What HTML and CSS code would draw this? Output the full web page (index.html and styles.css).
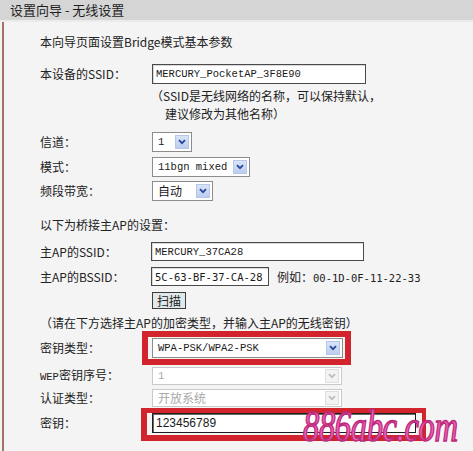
FILE: index.html
```html
<!DOCTYPE html>
<html lang="zh-CN">
<head>
<meta charset="utf-8">
<title>设置向导 - 无线设置</title>
<link rel="stylesheet" href="styles.css">
</head>
<body>
<div class="header">设置向导 - 无线设置</div>
<div class="panel">
  <div class="line intro">本向导页面设置Bridge模式基本参数</div>

  <div class="row r-ssid">
    <span class="label">本设备的SSID：</span>
    <span class="input mono w-ssid">MERCURY_PocketAP_3F8E90</span>
  </div>
  <div class="note">
    <div class="note-line">（SSID是无线网络的名称，可以保持默认，</div>
    <div class="note-line indent">建议修改为其他名称）</div>
  </div>

  <div class="row r-channel">
    <span class="label">信道：</span>
    <span class="select w-channel"><span class="sel-text mono">1</span><span class="arrow"><svg width="8" height="6" viewBox="0 0 8 6"><path d="M1 1.2 L4 4.2 L7 1.2" /></svg></span></span>
  </div>
  <div class="row r-mode">
    <span class="label">模式：</span>
    <span class="select w-mode"><span class="sel-text mono">11bgn mixed</span><span class="arrow"><svg width="8" height="6" viewBox="0 0 8 6"><path d="M1 1.2 L4 4.2 L7 1.2" /></svg></span></span>
  </div>
  <div class="row r-bw">
    <span class="label">频段带宽：</span>
    <span class="select w-bw"><span class="sel-text">自动</span><span class="arrow"><svg width="8" height="6" viewBox="0 0 8 6"><path d="M1 1.2 L4 4.2 L7 1.2" /></svg></span></span>
  </div>

  <div class="line r-heading">以下为桥接主AP的设置：</div>

  <div class="row r-ssid2">
    <span class="label">主AP的SSID：</span>
    <span class="input mono w-ssid2">MERCURY_37CA28</span>
  </div>
  <div class="row r-bssid">
    <span class="label">主AP的BSSID：</span>
    <span class="input sansmono w-bssid">5C-63-BF-37-CA-28</span>
    <span class="example">例如：<span class="sansmono">00-1D-0F-11-22-33</span></span>
  </div>
  <div class="row r-scan">
    <span class="label"></span>
    <span class="button">扫描</span>
  </div>

  <div class="line r-hint">（请在下方选择主AP的加密类型，并输入主AP的无线密钥）</div>

  <div class="row r-keytype">
    <span class="label">密钥类型：</span>
    <span class="redbox rb-type">
      <span class="select w-wide"><span class="sel-text mono">WPA-PSK/WPA2-PSK</span><span class="arrow"><svg width="8" height="6" viewBox="0 0 8 6"><path d="M1 1.2 L4 4.2 L7 1.2" /></svg></span></span>
    </span>
  </div>
  <div class="row r-wep">
    <span class="label"><span class="mono-label">WEP</span>密钥序号：</span>
    <span class="select disabled w-wide2"><span class="sel-text mono">1</span><span class="arrow"><svg width="8" height="6" viewBox="0 0 8 6"><path d="M1 1.2 L4 4.2 L7 1.2" /></svg></span></span>
  </div>
  <div class="row r-auth">
    <span class="label">认证类型：</span>
    <span class="select disabled w-wide2"><span class="sel-text">开放系统</span><span class="arrow"><svg width="8" height="6" viewBox="0 0 8 6"><path d="M1 1.2 L4 4.2 L7 1.2" /></svg></span></span>
  </div>
  <div class="row r-key">
    <span class="label">密钥：</span>
    <span class="redbox rb-key">
      <span class="input sans w-key">123456789</span>
    </span>
  </div>

  <div class="watermark">886abc.com</div>
</div>
</body>
</html>
```

FILE: styles.css
```css
html, body {
  margin: 0;
  padding: 0;
}
body {
  width: 473px;
  height: 451px;
  overflow: hidden;
  background: #f3f3f3;
  font-family: "Noto Sans CJK SC", "Noto Sans", sans-serif;
  font-size: 12px;
  color: #222;
}
.header {
  height: 20px;
  line-height: 20px;
  background: #d5d5d5;
  border-bottom: 2px solid #ebebeb;
  padding-left: 10px;
  font-size: 13px;
  color: #1e1e1e;
  white-space: pre;
}
.panel {
  position: relative;
  margin-left: 2px;
  border-left: 2px solid #a87262;
  height: 429px;
  padding: 10px 0 0 36px;
  box-sizing: border-box;
  background: #f4f4f4;
}
.line {
  height: 20px;
  line-height: 20px;
  white-space: nowrap;
}
.row {
  display: flex;
  align-items: center;
  height: 20px;
  white-space: nowrap;
}
.label {
  flex: none;
  width: 112px;
  line-height: 20px;
}
.mono-label {
  font-family: "Liberation Mono", monospace;
  font-size: 10.5px;
}
.mono {
  font-family: "Liberation Mono", monospace;
  font-size: 10.5px;
}
.sansmono {
  font-family: "DejaVu Sans Mono", monospace;
  font-size: 10.5px;
}
.sans {
  font-family: "Liberation Sans", Arial, sans-serif;
  font-size: 12px;
}

/* vertical rhythm */
.r-ssid { margin-top: 12px; }
.note { margin-top: 3px; padding-left: 111px; }
.note-line { height: 18px; line-height: 18px; white-space: nowrap; }
.note-line.indent { padding-left: 14px; }
.r-channel { margin-top: 9px; }
.r-mode { margin-top: 5px; }
.r-bw { margin-top: 4px; }
.r-heading { margin-top: 14px; }
.r-ssid2 { margin-top: 7px; height: 19px; }
.r-bssid { margin-top: 6px; height: 19px; }
.r-scan { margin-top: 6px; height: 17px; }
.r-hint { margin-top: 4px; }
.r-keytype { margin-top: 5px; }
.r-wep { margin-top: 9px; height: 18px; }
.r-auth { margin-top: 4px; height: 18px; }
.r-key { margin-top: 6px; }

/* inputs */
.input {
  box-sizing: border-box;
  height: 100%;
  display: flex;
  align-items: center;
  padding-left: 3px;
  background: #fff;
  border: 1px solid #4a4a4a;
  box-shadow: inset 1px 1px 0 #d8d8d8;
  color: #1a1a1a;
}
.w-ssid { width: 214px; }
.w-ssid2 { width: 213px; margin-left: -1px; }
.w-bssid { width: 118px; margin-left: -1px; }
.w-key {
  width: 264px;
  border-color: #1e1e1e;
  box-shadow: inset 1px 1px 0 #6a6a6a;
}
.example { margin-left: 8px; }
.example .sansmono { font-size: 10.5px; }

/* selects */
.select {
  box-sizing: border-box;
  height: 100%;
  display: flex;
  align-items: center;
  justify-content: space-between;
  background: #fff;
  border: 1px solid #8c8c8c;
  padding: 2px 2px 2px 5px;
  color: #1a1a1a;
}
.sel-text { line-height: 14px; }
.arrow {
  flex: none;
  width: 14px;
  height: 14px;
  box-sizing: border-box;
  display: flex;
  align-items: center;
  justify-content: center;
  background: linear-gradient(#d9e4f8, #bccdee);
  border: 1px solid #b4c6ea;
}
.arrow svg path {
  fill: none;
  stroke: #28479c;
  stroke-width: 1.8;
}
.w-channel { width: 40px; }
.w-mode { width: 98px; }
.w-bw { width: 61px; }
.w-wide { width: 191px; }
.w-wide2 { width: 190px; }
.select.disabled {
  border-color: #c9c9c9;
  color: #a9a9a9;
  padding-top: 1px;
  padding-bottom: 1px;
}
.select.disabled .arrow {
  background: #f3f3f3;
  border-color: #dedede;
}
.select.disabled .arrow svg path { stroke: #bdbdbd; }

/* button */
.button {
  box-sizing: border-box;
  height: 100%;
  width: 34px;
  display: flex;
  align-items: center;
  justify-content: center;
  background: #e1e8ea;
  border: 1px solid #3c3c3c;
  font-size: 12px;
}

/* red highlight boxes */
.redbox {
  display: flex;
  align-items: center;
  border: 6px solid #d2242c;
  box-sizing: content-box;
}
.rb-type {
  height: 20px;
  padding: 1px 2px 1px 4px;
  margin: -7px -8px -7px -10px;
}
.rb-key {
  height: 20px;
  padding: 0 6px 2px 5px;
  margin: -6px -12px -8px -11px;
  border-top-width: 5px;
  border-right-width: 4px;
}

/* watermark overlay */
.watermark {
  position: absolute;
  left: 299px;
  top: 380px;
  font-family: "Liberation Serif", serif;
  font-style: italic;
  font-size: 44px;
  line-height: 50px;
  color: #ec62b8;
  -webkit-text-stroke: 1.6px #bd2a7c;
  transform: scaleX(0.74);
  transform-origin: left top;
  white-space: nowrap;
  letter-spacing: -0.5px;
}
```
